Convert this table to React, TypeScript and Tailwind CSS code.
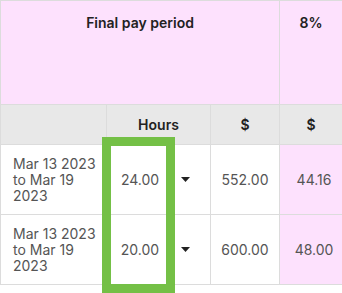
import React from "react";

const Caret = () => (
  <svg width="9" height="5" viewBox="0 0 9 5" className="block">
    <path d="M0 0 H9 L4.5 5 Z" fill="#222" />
  </svg>
);

const rows = [
  { hours: "24.00", amt: "552.00", pct: "44.16" },
  { hours: "20.00", amt: "600.00", pct: "48.00" },
];

export default function App() {
  return (
    <div
      className="relative w-[342px] h-[293px] bg-white overflow-hidden"
      style={{ fontFamily: "Inter, 'Noto Sans', sans-serif" }}
    >
      <table className="w-[342px] table-fixed border-collapse text-[14px]">
        <colgroup>
          <col className="w-[106px]" />
          <col className="w-[104px]" />
          <col className="w-[69px]" />
          <col className="w-[63px]" />
        </colgroup>
        <thead>
          <tr className="h-[104px] bg-[#fde1fd]">
            <th
              colSpan={3}
              className="border border-[#dcdcdc] align-top pt-[11px] font-semibold text-[#222] text-center"
            >
              Final pay period
            </th>
            <th className="border border-[#dcdcdc] align-top pt-[11px] font-semibold text-[#222] text-center">
              8%
            </th>
          </tr>
          <tr className="h-[40px] bg-[#e8e8e8]">
            <th className="border border-[#dcdcdc]"></th>
            <th className="border border-[#dcdcdc] font-semibold text-[#222] text-center">
              Hours
            </th>
            <th className="border border-[#dcdcdc] font-semibold text-[#222] text-center">
              $
            </th>
            <th className="border border-[#dcdcdc] font-semibold text-[#222] text-center">
              $
            </th>
          </tr>
        </thead>
        <tbody>
          {rows.map((r, i) => (
            <tr key={i} className="h-[70px]">
              <td className="border border-[#dcdcdc] pl-[12px] pr-1 leading-[16px] text-[#555]">
                Mar 13 2023 to Mar 19 2023
              </td>
              <td className="border border-[#dcdcdc] text-[#555]">
                <div className="flex items-center">
                  <span className="w-[64px] pl-[2px] text-center">{r.hours}</span>
                  <span className="ml-[10px]">
                    <Caret />
                  </span>
                </div>
              </td>
              <td className="border border-[#dcdcdc] text-center text-[#555]">{r.amt}</td>
              <td className="border border-[#dcdcdc] bg-[#fde1fd] text-center pl-[6px] text-[#555]">
                {r.pct}
              </td>
            </tr>
          ))}
        </tbody>
      </table>
      <div className="absolute left-[102px] top-[137px] w-[73px] h-[156px] border-[9px] border-[#74c046]" />
    </div>
  );
}
